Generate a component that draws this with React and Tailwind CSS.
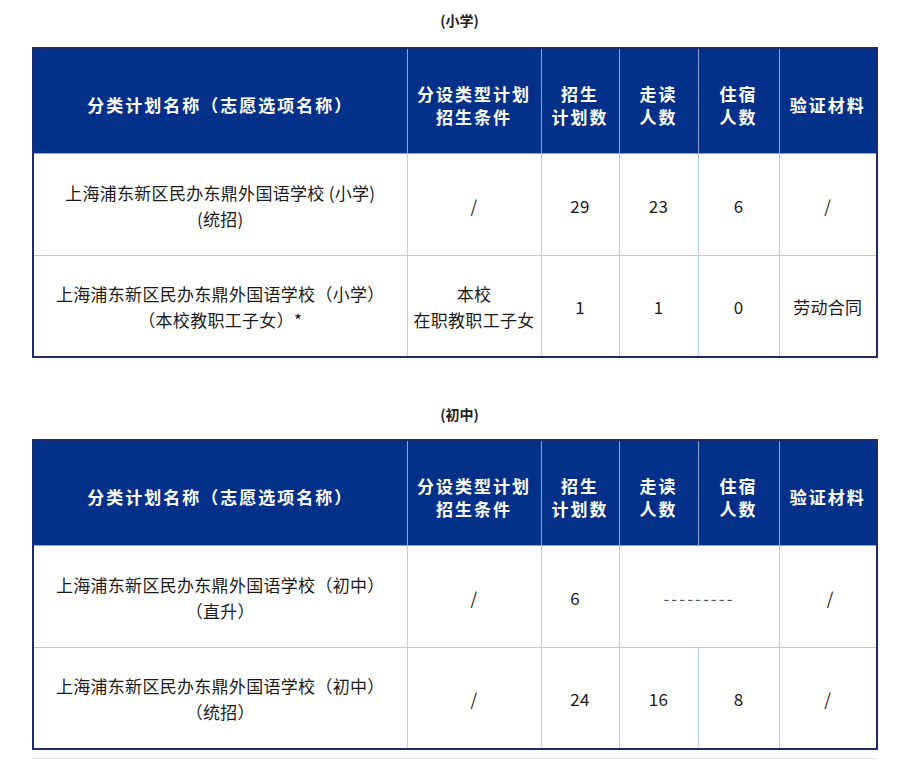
import React from 'react';

const font = { fontFamily: '"Noto Sans CJK SC", "Microsoft YaHei", sans-serif' };

const th = 'border border-[#8ea3cf] text-white font-bold text-[17px] leading-[23px] tracking-[2px] text-center align-middle pt-[8px]';
const td = 'border border-[#bccbe4] text-[#1a1a1a] text-[17px] leading-[26px] tracking-[0.3px] text-center align-middle pt-[3px]';

const Header = () => (
  <tr className="bg-[#033189] h-[105px]">
    <th className={`${th} w-[374px]`}>分类计划名称（志愿选项名称）</th>
    <th className={`${th} w-[134px]`}>分设类型计划<br />招生条件</th>
    <th className={`${th} w-[78px]`}>招生<br />计划数</th>
    <th className={`${th} w-[79px]`}>走读<br />人数</th>
    <th className={`${th} w-[81px]`}>住宿<br />人数</th>
    <th className={`${th} w-[98px] tracking-[1px]`}>验证材料</th>
  </tr>
);

const Title = ({ children }) => (
  <p className="text-center text-[14px] font-bold text-[#222] leading-[20px]">{children}</p>
);

export default function App() {
  return (
    <div className="w-[919px] h-[760px] bg-white overflow-hidden pt-[10px]" style={font}>
      <Title>(小学)</Title>
      <div className="px-[32px] mt-[17px]">
        <table className="w-[844px] border-collapse border-2 border-[#1c2b6e] table-fixed">
          <tbody>
            <Header />
            <tr className="h-[102px]">
              <td className={td}>上海浦东新区民办东鼎外国语学校 (小学)<br />(统招)</td>
              <td className={td}>/</td>
              <td className={td}>29</td>
              <td className={td}>23</td>
              <td className={td}>6</td>
              <td className={td}>/</td>
            </tr>
            <tr className="h-[102px]">
              <td className={td}>上海浦东新区民办东鼎外国语学校（小学）<br />（本校教职工子女）*</td>
              <td className={td}>本校<br />在职教职工子女</td>
              <td className={td}>1</td>
              <td className={td}>1</td>
              <td className={td}>0</td>
              <td className={td}>劳动合同</td>
            </tr>
          </tbody>
        </table>
      </div>

      <div className="mt-[46px]">
        <Title>(初中)</Title>
      </div>
      <div className="px-[32px] mt-[15px]">
        <table className="w-[844px] border-collapse border-2 border-[#1c2b6e] table-fixed">
          <tbody>
            <Header />
            <tr className="h-[102px]">
              <td className={td}>上海浦东新区民办东鼎外国语学校（初中）<br />（直升）</td>
              <td className={td}>/</td>
              <td className={`${td} pr-[10px]`}>6</td>
              <td className={`${td} text-[#555] tracking-[2px]`} colSpan={2}>---------</td>
              <td className={`${td} pl-[5px]`}>/</td>
            </tr>
            <tr className="h-[102px]">
              <td className={td}>上海浦东新区民办东鼎外国语学校（初中）<br />（统招）</td>
              <td className={td}>/</td>
              <td className={td}>24</td>
              <td className={td}>16</td>
              <td className={td}>8</td>
              <td className={td}>/</td>
            </tr>
          </tbody>
        </table>
        <div className="mt-[8px] border-t border-[#e6e6e6] w-[846px]" />
      </div>
    </div>
  );
}
